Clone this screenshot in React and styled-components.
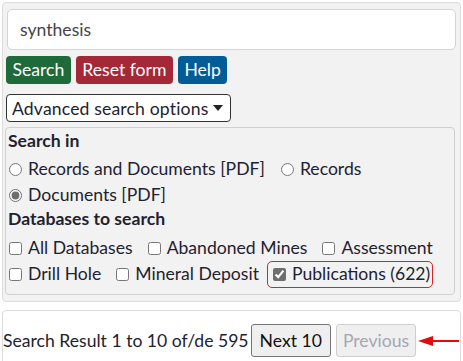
import React from 'react';
import styled, { createGlobalStyle } from 'styled-components';

const Global = createGlobalStyle`
  body {
    margin: 0;
    font-family: Lato, "Noto Sans", sans-serif;
    font-size: 17.6px;
    color: #1f2230;
    background: #fff;
  }
`;

const Page = styled.div`
  width: 463px;
  height: 361px;
  overflow: hidden;
  padding: 2px 2px 0 2px;
  box-sizing: border-box;
`;

const Panel = styled.div`
  background: #f2f2f2;
  border: 1px solid #dcdcdc;
  border-radius: 4px;
  padding: 6px 0 6px 0;
  height: 300px;
  box-sizing: border-box;
`;

const SearchInput = styled.input`
  display: block;
  width: 449px;
  height: 41px;
  margin-left: 4px;
  box-sizing: border-box;
  border: 1px solid #d4d4d4;
  border-radius: 5px;
  background: #fff;
  padding: 0 12px;
  font: inherit;
  color: #454545;
  outline: none;
`;

const ButtonRow = styled.div`
  display: flex;
  gap: 5px;
  margin: 6px 0 0 3px;
`;

const Btn = styled.button`
  height: 28px;
  padding: 0 6.5px;
  border: none;
  border-radius: 4px;
  background: ${p => p.$bg};
  color: #fff;
  font: inherit;
  line-height: 28px;
`;

const Advanced = styled.button`
  display: flex;
  align-items: center;
  margin: 10px 0 0 3px;
  height: 28px;
  padding: 0 7px 0 5px;
  border: 1px solid #333;
  border-radius: 4px;
  background: #fff;
  color: #1f2230;
  font: inherit;
  letter-spacing: 0.15px;
`;

const Caret = styled.span`
  width: 0;
  height: 0;
  margin-left: 5px;
  border-top: 6px solid #222;
  border-left: 5px solid transparent;
  border-right: 5px solid transparent;
`;

const Fieldset = styled.div`
  margin: 5px 5px 0 2px;
  border: 1px solid #d0d0d0;
  border-radius: 4px;
  padding: 1px 2px 0 2px;
  height: 168px;
  box-sizing: border-box;
`;

const Heading = styled.div`
  font-weight: 700;
  line-height: 24px;
  height: ${p => p.$h}px;
`;

const Row = styled.div`
  display: flex;
  align-items: center;
  height: ${p => p.$h}px;
`;

const Opt = styled.label`
  display: flex;
  align-items: center;
  margin-right: ${p => p.$gap || 0}px;
  white-space: nowrap;
  line-height: 24px;
  input {
    margin: 1px 6px 0 1px;
    width: 13px;
    height: 13px;
    accent-color: #6e6e6e;
  }
`;

const Highlight = styled.div`
  display: flex;
  align-items: center;
  height: 27px;
  box-sizing: border-box;
  padding: 0 2px 0 4px;
  border: 1.5px solid #d8232a;
  border-radius: 5px;
`;

const ResultBar = styled.div`
  margin-top: 8px;
  background: #fff;
  border: 1px solid #dcdcdc;
  border-radius: 4px;
  height: 70px;
  display: flex;
  align-items: flex-start;
  padding: 13px 0 0 0;
  box-sizing: border-box;
`;

const ResultText = styled.span`
  line-height: 33px;
  margin-right: 2px;
  white-space: nowrap;
`;

const PageBtn = styled.button`
  flex-shrink: 0;
  white-space: nowrap;
  height: 33px;
  padding: 0 ${p => (p.disabled ? 6 : 8)}px;
  margin-right: ${p => (p.disabled ? 2 : 5)}px;
  border: 1px solid ${p => (p.disabled ? '#cfcfcf' : '#767676')};
  border-radius: 3px;
  background: #efefef;
  color: ${p => (p.disabled ? '#a6a6b4' : '#111')};
  font: inherit;
`;

const Arrow = () => (
  <svg width="42" height="14" viewBox="0 0 42 14" style={{ marginTop: 10, flexShrink: 0 }}>
    <line x1="12" y1="7" x2="41" y2="7" stroke="#e20a0a" strokeWidth="2" />
    <polygon points="0,7 15,2 15,12" fill="#e20a0a" />
  </svg>
);

const noop = () => {};

export default function App() {
  return (
    <Page>
      <Global />
      <Panel>
        <SearchInput value="synthesis" onChange={noop} />
        <ButtonRow>
          <Btn $bg="#1e6a3b">Search</Btn>
          <Btn $bg="#a52837">Reset form</Btn>
          <Btn $bg="#045c96">Help</Btn>
        </ButtonRow>
        <Advanced>
          Advanced search options<Caret />
        </Advanced>
        <Fieldset>
          <Heading $h={27}>Search in</Heading>
          <Row $h={26}>
            <Opt $gap={15}><input type="radio" name="in" readOnly />Records and Documents [PDF]</Opt>
            <Opt><input type="radio" name="in" readOnly />Records</Opt>
          </Row>
          <Row $h={25}>
            <Opt><input type="radio" name="in" checked readOnly />Documents [PDF]</Opt>
          </Row>
          <Heading $h={28}>Databases to search</Heading>
          <Row $h={26}>
            <Opt $gap={14}><input type="checkbox" readOnly />All Databases</Opt>
            <Opt $gap={14}><input type="checkbox" readOnly />Abandoned Mines</Opt>
            <Opt><input type="checkbox" readOnly />Assessment</Opt>
          </Row>
          <Row $h={26}>
            <Opt $gap={14}><input type="checkbox" readOnly />Drill Hole</Opt>
            <Opt $gap={8}><input type="checkbox" readOnly />Mineral Deposit</Opt>
            <Highlight>
              <Opt><input type="checkbox" checked readOnly />Publications (622)</Opt>
            </Highlight>
          </Row>
        </Fieldset>
      </Panel>
      <ResultBar>
        <ResultText>Search Result 1 to 10 of/de 595</ResultText>
        <PageBtn>Next 10</PageBtn>
        <PageBtn disabled>Previous</PageBtn>
        <Arrow />
      </ResultBar>
    </Page>
  );
}
